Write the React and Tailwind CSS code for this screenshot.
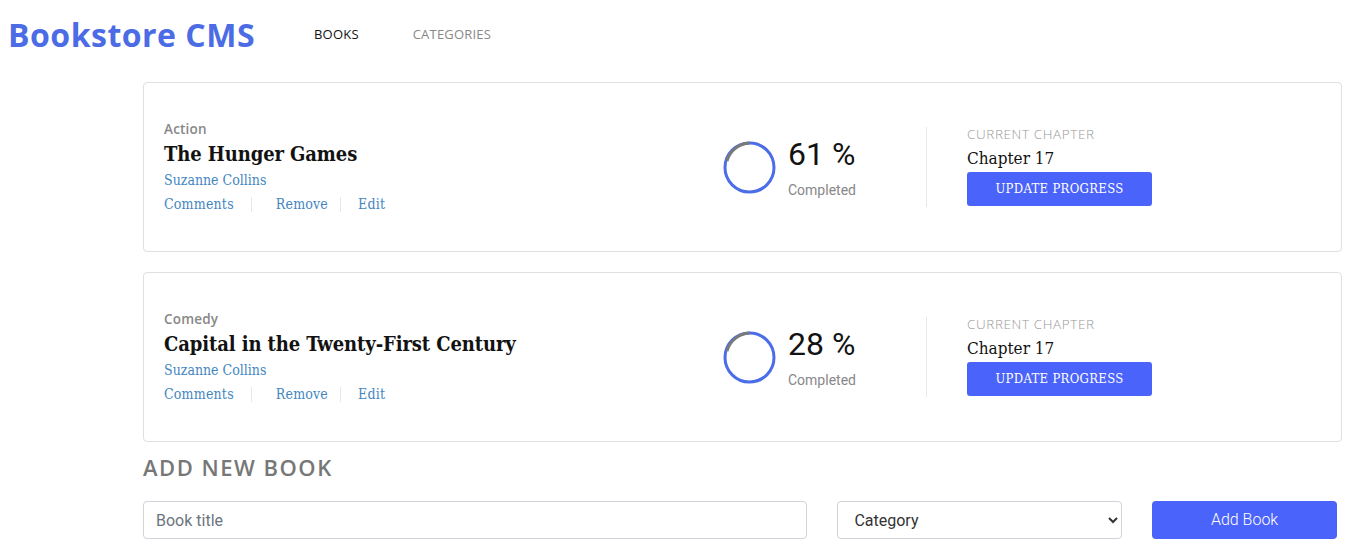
import React from 'react';

const books = [
  { category: 'Action', title: 'The Hunger Games', author: 'Suzanne Collins', percent: 61, chapter: 'Chapter 17' },
  { category: 'Comedy', title: 'Capital in the Twenty-First Century', author: 'Suzanne Collins', percent: 28, chapter: 'Chapter 17' },
];

function Ring() {
  return (
    <svg width="53" height="53" viewBox="0 0 53 53">
      <circle cx="26.5" cy="26.5" r="24.5" fill="none" stroke="#4b6de8" strokeWidth="3" />
      <path d="M 4 20 A 24.5 24.5 0 0 1 26.5 2" fill="none" stroke="#7a7a7a" strokeWidth="3" />
    </svg>
  );
}

function BookCard({ book }) {
  return (
    <div className="flex items-center h-[170px] bg-white border border-[#e0e0e0] rounded-[4px] pl-[20px]">
      <div className="flex-1 flex flex-col">
        <span className="text-[13.5px] font-semibold text-[#888] leading-[18px] tracking-[0.2px] font-['Open_Sans',sans-serif]">{book.category}</span>
        <h2 className="mt-[3px] text-[20px] font-bold text-[#121212] leading-[26px] font-['DejaVu_Serif',serif] font-stretch-condensed tracking-[-0.1px]">{book.title}</h2>
        <span className="text-[14px] text-[#4386bf] leading-[20px] mt-[3px] font-['DejaVu_Serif',serif] font-stretch-condensed font-light">{book.author}</span>
        <div className="flex items-center mt-[4px] text-[14px] text-[#4386bf] font-['DejaVu_Serif',serif] font-stretch-condensed font-light tracking-[0.2px]">
          <span>Comments</span>
          <span className="w-px h-[15px] bg-[#e8e8e8] ml-[17px] mr-[24px]"></span>
          <span>Remove</span>
          <span className="w-px h-[15px] bg-[#e8e8e8] ml-[12px] mr-[17px]"></span>
          <span>Edit</span>
        </div>
      </div>
      <div className="flex items-center w-[203px]">
        <Ring />
        <div className="flex flex-col ml-[12px] font-['Roboto',sans-serif]">
          <span className="text-[32px] leading-[36px] text-[#121212]">{book.percent} %</span>
          <span className="text-[14px] leading-[18px] text-[#888] mt-[9px]">Completed</span>
        </div>
      </div>
      <div className="w-px h-[80px] bg-[#e8e8e8]"></div>
      <div className="flex flex-col ml-[40px] mr-[189px] mb-[4px] w-[185px]">
        <span className="text-[13.5px] leading-[18px] text-[#999] uppercase tracking-[0.6px] font-['Open_Sans',sans-serif] font-light">Current Chapter</span>
        <span className="text-[17px] leading-[24px] text-[#121212] mt-[3px] font-['DejaVu_Serif',serif] font-stretch-condensed font-light">{book.chapter}</span>
        <button className="mt-[2px] h-[34px] w-[185px] bg-[#4a63fa] text-white text-[13px] rounded-[3px] uppercase font-['DejaVu_Serif',serif] font-stretch-condensed font-light tracking-[0.3px]">
          Update Progress
        </button>
      </div>
    </div>
  );
}

export default function App() {
  return (
    <div className="w-[1356px] h-[559px] bg-white overflow-hidden">
      <header className="flex items-center h-[70px] pl-[8px]">
        <h1 className="text-[32px] font-bold text-[#4c6ce6] tracking-[0.5px] font-['Open_Sans',sans-serif]">Bookstore CMS</h1>
        <nav className="flex items-center ml-[59px] gap-[54px] text-[13px] uppercase tracking-[0.2px] font-['Open_Sans',sans-serif]">
          <span className="text-[#121212]">Books</span>
          <span className="text-[#888]">Categories</span>
        </nav>
      </header>
      <main className="pl-[143px] pr-[14px] pt-[12px]">
        <div className="flex flex-col gap-[20px]">
          {books.map((b) => <BookCard key={b.title} book={b} />)}
        </div>
        <h3 className="mt-[11px] text-[22px] font-semibold text-[#777] uppercase leading-[28px] tracking-[1.5px] font-['Open_Sans',sans-serif]">Add New Book</h3>
        <form className="flex items-center mt-[20px] pr-[5px]">
          <input
            type="text"
            placeholder="Book title"
            className="w-[665px] h-[38px] px-[12px] border border-[#ced4da] rounded-[4px] text-[16px] text-[#495057] placeholder-[#6c757d] font-['Roboto',sans-serif] outline-none"
          />
          <select
            defaultValue=""
            className="ml-[30px] w-[285px] h-[38px] px-[12px] border border-[#ced4da] rounded-[4px] text-[16px] text-[#333] bg-white font-['Roboto',sans-serif]"
          >
            <option value="" disabled>Category</option>
            <option>Action</option>
            <option>Comedy</option>
          </select>
          <button type="button" className="ml-[30px] w-[185px] h-[38px] bg-[#4a63fa] text-white text-[16px] rounded-[4px] font-['Roboto',sans-serif] font-light">
            Add Book
          </button>
        </form>
      </main>
    </div>
  );
}
